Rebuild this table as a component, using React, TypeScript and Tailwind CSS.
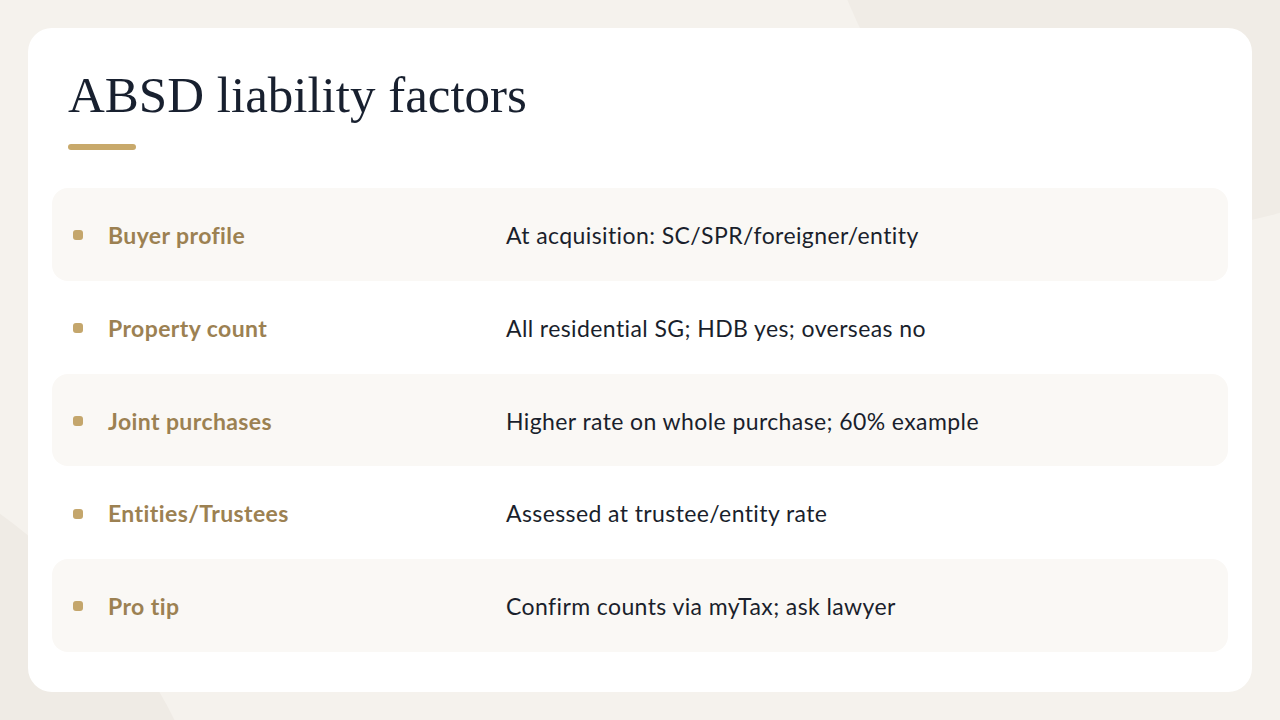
import React from 'react';

interface Factor {
    label: string;
    value: string;
}

const factors: Factor[] = [
    { label: 'Buyer profile', value: 'At acquisition: SC/SPR/foreigner/entity' },
    { label: 'Property count', value: 'All residential SG; HDB yes; overseas no' },
    { label: 'Joint purchases', value: 'Higher rate on whole purchase; 60% example' },
    { label: 'Entities/Trustees', value: 'Assessed at trustee/entity rate' },
    { label: 'Pro tip', value: 'Confirm counts via myTax; ask lawyer' },
];

const App: React.FC = () => {
    return (
        <div className="relative w-[1280px] h-[720px] overflow-hidden bg-[#f5f2ed] p-[28px] font-['Lato',sans-serif]">
            {/* soft background shapes */}
            <div className="absolute -top-[487px] left-[823px] w-[714px] h-[714px] rounded-full bg-[#f0ece6]" />
            <div className="absolute top-[407px] -left-[893px] w-[1126px] h-[1126px] rounded-full bg-[#efebe5]" />

            <div className="relative h-full rounded-[24px] bg-white px-[24px] pt-[42px] pb-[41px]">
                <div className="px-[16px]">
                    <h1 className="font-['Liberation_Serif',serif] text-[51px] leading-none text-[#18202f]">
                        ABSD liability factors
                    </h1>
                    <div className="mt-[23px] h-[6px] w-[68px] rounded-full bg-[#c8a96b]" />
                </div>

                <div className="mt-[38px] flex flex-col">
                    {factors.map((f, i) => (
                        <div
                            key={f.label}
                            className={`flex h-[92.75px] items-center rounded-[16px] pl-[21px] pt-[2px] ${
                                i % 2 === 0 ? 'bg-[#faf8f5]' : 'bg-transparent'
                            }`}
                        >
                            <span className="mr-[25px] h-[10px] w-[10px] shrink-0 rounded-[3px] bg-[#c4a66c]" />
                            <span className="w-[398px] shrink-0 text-[23px] font-bold tracking-[0.4px] text-[#9c8152]">
                                {f.label}
                            </span>
                            <span className="text-[23px] tracking-[0.4px] text-[#1a1f2c]">{f.value}</span>
                        </div>
                    ))}
                </div>
            </div>
        </div>
    );
};

export default App;
